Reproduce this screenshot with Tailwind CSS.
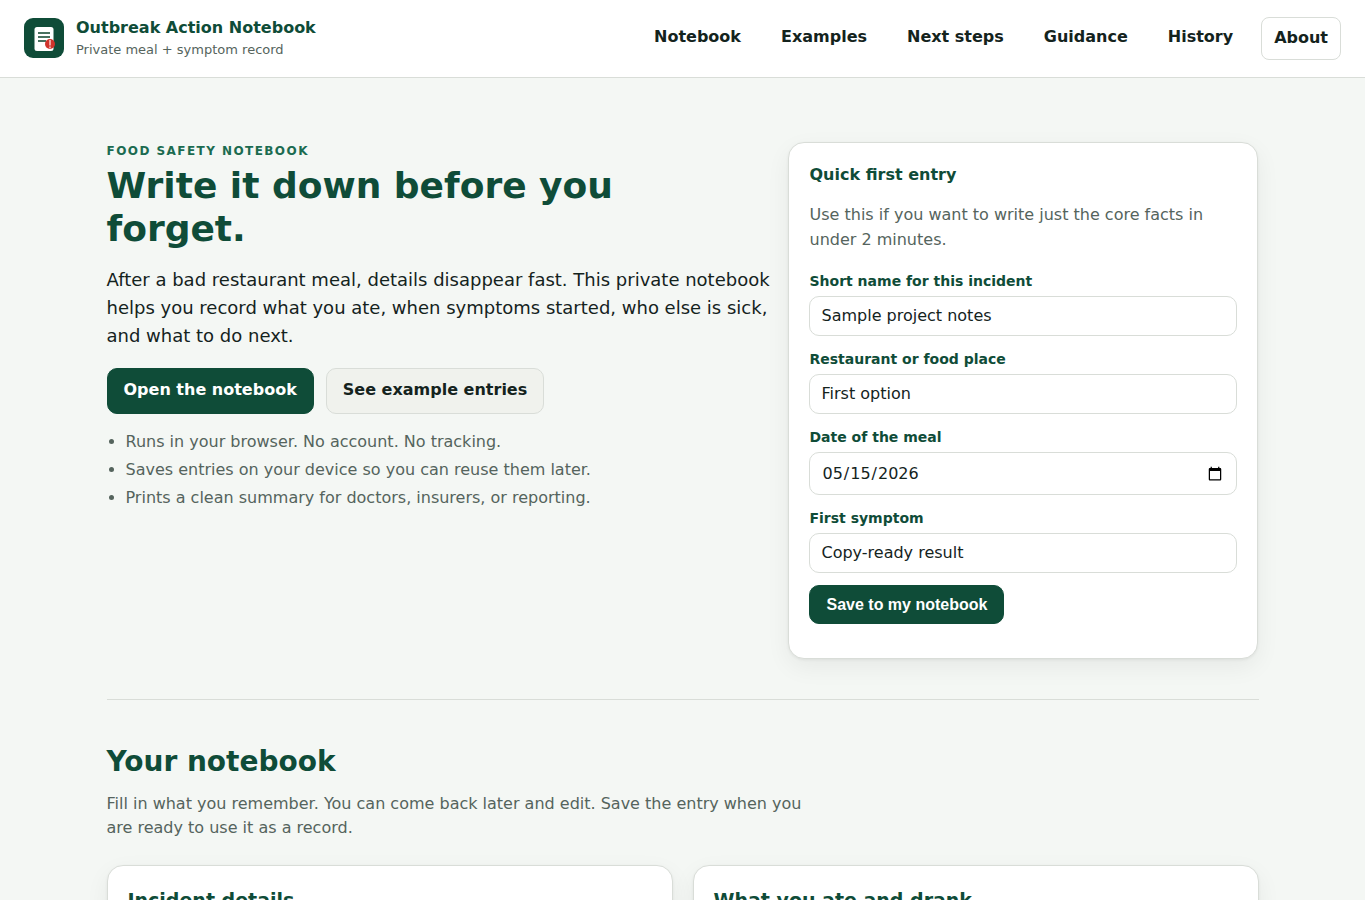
<!DOCTYPE html>
<html lang="en">

<head>
  <meta charset="UTF-8">
  <meta name="viewport" content="width=device-width, initial-scale=1.0">
  <title>Outbreak Action Notebook</title>
  <script src="https://cdn.jsdelivr.net/npm/@tailwindcss/browser@4"></script>
</head>

<body class="bg-[#f4f7f4] font-['DejaVu_Sans',sans-serif] text-base text-[#14231d]">
  <header class="flex items-center justify-between border-b border-[#d9ddd8] bg-white px-6 pt-4 pb-[17px]">
    <a href="#" class="flex items-center gap-3">
      <svg class="h-10 w-10" viewBox="0 0 40 40" fill="none">
        <rect width="40" height="40" rx="9" fill="#0f4c38" />
        <rect x="10.500" y="9" width="19" height="24" rx="2.500" fill="#fff" />
        <path d="M14 15h12M14 19h12M14 23h8" stroke="#48705f" stroke-width="1.800" />
        <circle cx="26" cy="26" r="5" fill="#d0342c" />
        <path d="M26 22v5.500M26 28.500v1.700" stroke="#fbd5d2" stroke-width="1.400" />
      </svg>
      <span class="flex flex-col">
        <span class="font-bold leading-6 text-[#0f4c38]">Outbreak Action Notebook</span>
        <span class="text-[13px] leading-5 text-[#55645d]">Private meal + symptom record</span>
      </span>
    </a>
    <nav class="flex items-start gap-4 font-bold leading-6">
      <a href="#notebook" class="px-3 py-2">Notebook</a>
      <a href="#examples" class="px-3 py-2">Examples</a>
      <a href="#next" class="px-3 py-2">Next steps</a>
      <a href="#guidance" class="px-3 py-2">Guidance</a>
      <a href="#history" class="px-3 py-2">History</a>
      <a href="#about" class="rounded-lg border border-[#d9ddd8] px-3 pt-2 pb-[9px]">About</a>
    </nav>
  </header>

  <main class="mx-auto max-w-[1200px] px-6">
    <section class="grid grid-cols-[1.4fr_1fr] items-start gap-6 border-b border-[#d9ddd8] pt-16 pb-10">
      <div>
        <p class="text-xs font-bold uppercase leading-[18px] tracking-[0.12em] text-[#1b6b50]">Food safety notebook</p>
        <h1 class="mt-1 text-4xl font-bold leading-[43px] text-[#0f4c38]">Write it down before you forget.</h1>
        <p class="mt-4 -mr-2 text-lg leading-7">After a bad restaurant meal, details disappear fast. This private notebook helps you record what you ate, when symptoms started, who else is sick, and what to do next.</p>
        <div class="mt-[18px] flex gap-3 font-bold leading-6">
          <a href="#notebook" class="rounded-[10px] border border-[#0f4c38] bg-[#0f4c38] px-4 pt-[9px] pb-[11px] text-white">Open the notebook</a>
          <a href="#examples" class="rounded-[10px] border border-[#d9ddd8] bg-[#f0f2ed] px-4 pt-[9px] pb-[11px]">See example entries</a>
        </div>
        <ul class="mt-4 list-disc space-y-1 pl-[19px] leading-6 text-[#55645d]">
          <li>Runs in your browser. No account. No tracking.</li>
          <li>Saves entries on your device so you can reuse them later.</li>
          <li>Prints a clean summary for doctors, insurers, or reporting.</li>
        </ul>
      </div>

      <div class="rounded-2xl border border-[#d9ddd8] bg-white px-5 pt-5 pb-[34px] shadow-[0_8px_24px_rgba(0,0,0,0.06),0_1px_3px_rgba(0,0,0,0.06)]">
        <h2 class="font-bold leading-6 text-[#0f4c38]">Quick first entry</h2>
        <p class="mt-[15px] leading-[25px] text-[#55645d]">Use this if you want to write just the core facts in under 2 minutes.</p>
        <form class="mt-[18px] flex flex-col items-start gap-3">
          <div class="flex w-full flex-col gap-1">
            <label for="name" class="text-sm font-bold leading-[22px] text-[#0f4c38]">Short name for this incident</label>
            <input id="name" type="text" value="Sample project notes" class="w-full rounded-[10px] border border-[#d9ddd8] bg-white px-[11px] py-[9px] leading-5">
          </div>
          <div class="flex w-full flex-col gap-1">
            <label for="place" class="text-sm font-bold leading-[22px] text-[#0f4c38]">Restaurant or food place</label>
            <input id="place" type="text" value="First option" class="w-full rounded-[10px] border border-[#d9ddd8] bg-white px-[11px] py-[9px] leading-5">
          </div>
          <div class="flex w-full flex-col gap-1">
            <label for="date" class="text-sm font-bold leading-[22px] text-[#0f4c38]">Date of the meal</label>
            <input id="date" type="date" value="2026-05-15" class="h-[43px] w-full rounded-[10px] border border-[#d9ddd8] bg-white px-[11px] leading-5">
          </div>
          <div class="flex w-full flex-col gap-1">
            <label for="symptom" class="text-sm font-bold leading-[22px] text-[#0f4c38]">First symptom</label>
            <input id="symptom" type="text" value="Copy-ready result" class="w-full rounded-[10px] border border-[#d9ddd8] bg-white px-[11px] py-[9px] leading-5">
          </div>
          <button type="button" class="rounded-[10px] border border-[#0f4c38] bg-[#0f4c38] px-4 py-[9px] font-['Liberation_Sans',sans-serif] font-bold leading-[19px] text-white">Save to my notebook</button>
        </form>
      </div>
    </section>

    <section id="notebook" class="pt-[41px] pb-10">
      <h2 class="text-[28px] font-bold leading-[42px] text-[#0f4c38]">Your notebook</h2>
      <p class="mt-[9px] max-w-[720px] leading-6 text-[#55645d]">Fill in what you remember. You can come back later and edit. Save the entry when you are ready to use it as a record.</p>
      <div class="mt-[25px] grid grid-cols-2 gap-5">
        <div class="rounded-2xl border border-[#d9ddd8] bg-white p-5 shadow-[0_8px_24px_rgba(0,0,0,0.06),0_1px_3px_rgba(0,0,0,0.06)]">
          <h3 class="text-[19px] font-bold leading-7 text-[#0f4c38]">Incident details</h3>
        </div>
        <div class="rounded-2xl border border-[#d9ddd8] bg-white p-5 shadow-[0_8px_24px_rgba(0,0,0,0.06),0_1px_3px_rgba(0,0,0,0.06)]">
          <h3 class="text-[19px] font-bold leading-7 text-[#0f4c38]">What you ate and drank</h3>
        </div>
      </div>
    </section>
  </main>
</body>

</html>
